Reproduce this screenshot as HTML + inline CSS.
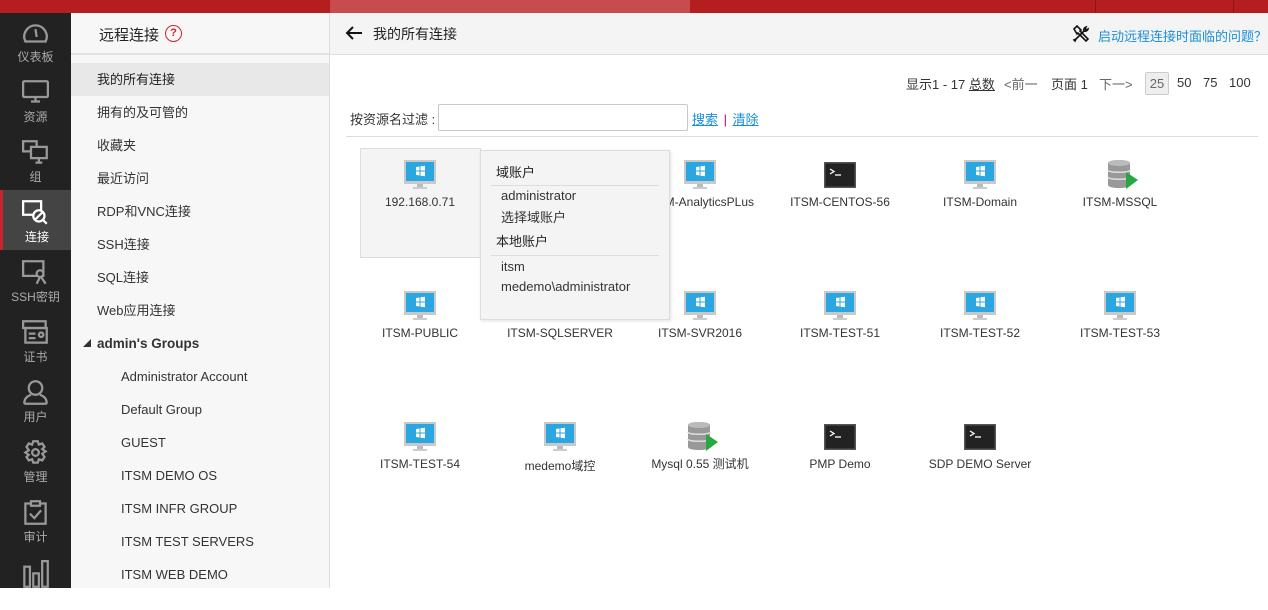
<!DOCTYPE html>
<html><head><meta charset="utf-8"><style>
*{box-sizing:border-box;margin:0;padding:0}
body{width:1268px;height:588px;overflow:hidden;background:#fff;font-family:"Liberation Sans","Noto Sans CJK SC",sans-serif;font-size:13px;color:#333;position:relative}
.abs{position:absolute}
.top{left:0;top:0;width:1268px;height:13px;background:#b51d1f}
.side{left:0;top:13px;width:71px;height:575px;background:#222}
.nav{position:absolute;left:0;width:71px;height:60px;text-align:center;color:#aaa;font-size:12px}
.nav svg{position:absolute;left:22px;top:10px}
.nav span{position:absolute;left:0;right:0;top:38px}
.nav.act{background:#444;color:#fff;border-left:3px solid #c8262b}
.panel{left:71px;top:13px;width:259px;height:575px;background:#f7f7f7;border-right:1px solid #ddd}
.ph{position:absolute;left:0;top:0;width:258px;height:42px;border-bottom:2px solid #e2e2e2}
.mi{position:absolute;left:0;width:258px;height:33px;line-height:33px;padding-left:26px;font-size:13px;color:#333}
.main{left:330px;top:13px;width:938px;height:42px;background:#f4f4f4;border-bottom:1px solid #ddd}
.cell{position:absolute;width:140px;text-align:center;font-size:12px;color:#333}
.cell svg{display:block;margin:0 auto}
.cell div{margin-top:5px}
a{color:#1a8fd8}
</style></head><body>
<div class="abs top"></div>
<div class="abs" style="left:330px;top:0;width:360px;height:13px;background:#c84c4d"></div>
<div class="abs" style="left:1095px;top:0;width:1px;height:13px;background:#8c1516"></div>
<div class="abs" style="left:1233px;top:0;width:1px;height:13px;background:#8c1516"></div>

<div class="abs side"></div>
<svg width="0" height="0" style="position:absolute"><defs>
<symbol id="mon" viewBox="0 0 32 30"><rect x="0" y="0" width="32" height="24" fill="#c9c9c9"/><rect x="2" y="2" width="28" height="19" fill="#2aa6e0"/><rect x="13" y="24" width="6" height="3" fill="#bbb"/><rect x="9" y="27" width="14" height="2" fill="#ccc"/><path d="M12 7l3.5-.5v4H12zM16.5 6.3l4.5-.6v4.8h-4.5zM12 11.5h3.5v4L12 15zM16.5 11.5H21v4.8l-4.5-.6z" fill="#fff"/></symbol>
<symbol id="term" viewBox="0 0 32 26"><rect width="32" height="26" fill="#555"/><rect x="1.5" y="1.5" width="29" height="23" fill="#222"/><path d="M6 7l4 2.5-4 2.5" stroke="#fff" stroke-width="1.3" fill="none"/><path d="M11 13h6" stroke="#fff" stroke-width="1.3"/></symbol>
<symbol id="db" viewBox="0 0 32 32"><path d="M2 5c0-4 22-4 22 0v22c0 4-22 4-22 0z" fill="#999"/><ellipse cx="13" cy="5" rx="11" ry="3" fill="#bbb"/><path d="M2 12c0 3 22 3 22 0M2 19c0 3 22 3 22 0" stroke="#ddd" stroke-width="1.5" fill="none"/><path d="M20 14l12 8-12 9z" fill="#27a845"/></symbol>
</defs></svg>

<div class="nav" style="top:10px"><svg width="27" height="25" viewBox="0 0 24 22" fill="none" stroke="#999" stroke-width="2"><path d="M3 19A10 10 0 1 1 21 19Z"/><path d="M12 8l1 7" /></svg><span>仪表板</span></div>
<div class="nav" style="top:70px"><svg width="27" height="25" viewBox="0 0 24 22" fill="none" stroke="#999" stroke-width="2"><rect x="1" y="1" width="22" height="14" rx="1"/><path d="M8 19h8M12 15v4"/></svg><span>资源</span></div>
<div class="nav" style="top:130px"><svg width="27" height="25" viewBox="0 0 24 22" fill="none" stroke="#999" stroke-width="2"><rect x="1" y="1" width="12" height="9"/><rect x="8" y="6" width="14" height="10" fill="#222"/><path d="M12 20h6M15 16v4"/></svg><span>组</span></div>
<div class="nav act" style="top:190px"><svg width="27" height="25" viewBox="0 0 24 22" fill="none" stroke="#fff" stroke-width="2" style="left:19px"><rect x="1" y="1" width="16" height="12"/><circle cx="15" cy="14" r="5" fill="#444"/><path d="M12 17l6-6M19 18l3 3"/></svg><span>连接</span></div>
<div class="nav" style="top:250px"><svg width="27" height="25" viewBox="0 0 24 22" fill="none" stroke="#999" stroke-width="2"><rect x="1" y="1" width="18" height="13"/><circle cx="16" cy="12" r="3" fill="#222"/><path d="M16 15l-3 6M17 15l4 6"/></svg><span>SSH密钥</span></div>
<div class="nav" style="top:310px"><svg width="27" height="25" viewBox="0 0 24 22" fill="none" stroke="#999" stroke-width="2"><rect x="1" y="1" width="20" height="6"/><rect x="3" y="7" width="19" height="13"/><path d="M6 12h6M6 16h6"/><circle cx="17" cy="13" r="2"/></svg><span>证书</span></div>
<div class="nav" style="top:370px"><svg width="27" height="25" viewBox="0 0 24 22" fill="none" stroke="#999" stroke-width="2"><circle cx="12" cy="7" r="6"/><path d="M2 21c0-6 4-7 6-8M22 21c0-6-4-7-6-8M2 21h20"/></svg><span>用户</span></div>
<div class="nav" style="top:430px"><svg width="27" height="25" viewBox="0 0 24 22" fill="none" stroke="#999" stroke-width="2"><circle cx="12" cy="11" r="3"/><path d="M10 1h4l1 3 3-1 2 3-2 2 3 2-3 2 2 3-2 3-3-1-1 3h-4l-1-3-3 1-2-3 2-2-3-2 3-2-2-3 2-3 3 1z"/></svg><span>管理</span></div>
<div class="nav" style="top:490px"><svg width="27" height="25" viewBox="0 0 24 22" fill="none" stroke="#999" stroke-width="2"><rect x="3" y="3" width="18" height="18"/><rect x="8" y="1" width="8" height="4" fill="#222"/><path d="M7 12l4 4 6-7"/></svg><span>审计</span></div>
<div class="nav" style="top:550px"><svg width="27" height="29" viewBox="0 0 24 26" fill="none" stroke="#999" stroke-width="2"><rect x="2" y="6" width="5" height="18"/><rect x="10" y="12" width="5" height="12"/><rect x="18" y="1" width="5" height="23"/></svg></div>

<div class="abs panel">
 <div class="ph"><span style="position:absolute;left:28px;top:11px;font-size:15px;color:#222">远程连接</span><span style="position:absolute;left:94px;top:12px;width:17px;height:17px;border:1.5px solid #c8262b;border-radius:50%;color:#c8262b;font-size:11px;font-weight:bold;text-align:center;line-height:14px">?</span></div>
 <div class="mi" style="top:50px;background:#e8e8e8;color:#222">我的所有连接</div>
 <div class="mi" style="top:83px">拥有的及可管的</div>
 <div class="mi" style="top:116px">收藏夹</div>
 <div class="mi" style="top:149px">最近访问</div>
 <div class="mi" style="top:182px">RDP和VNC连接</div>
 <div class="mi" style="top:215px">SSH连接</div>
 <div class="mi" style="top:248px">SQL连接</div>
 <div class="mi" style="top:281px">Web应用连接</div>
 <div class="mi" style="top:314px;font-weight:bold;font-size:13.5px;color:#333"><span style="position:absolute;left:12px;font-size:8px">◢</span>admin's Groups</div>
 <div class="mi" style="top:347px;padding-left:50px">Administrator Account</div>
 <div class="mi" style="top:380px;padding-left:50px">Default Group</div>
 <div class="mi" style="top:413px;padding-left:50px">GUEST</div>
 <div class="mi" style="top:446px;padding-left:50px">ITSM DEMO OS</div>
 <div class="mi" style="top:479px;padding-left:50px">ITSM INFR GROUP</div>
 <div class="mi" style="top:512px;padding-left:50px">ITSM TEST SERVERS</div>
 <div class="mi" style="top:545px;padding-left:50px">ITSM WEB DEMO</div>
</div>

<div class="abs main">
 <svg style="position:absolute;left:15px;top:12px" width="18" height="16" viewBox="0 0 18 16" fill="none" stroke="#111" stroke-width="2"><path d="M17 8H2M8 2L2 8l6 6"/></svg>
 <span style="position:absolute;left:43px;top:11px;font-size:14px;color:#222">我的所有连接</span>
 <svg style="position:absolute;left:742px;top:12px" width="18" height="18" viewBox="0 0 18 18" fill="none" stroke="#111" stroke-width="1.6"><path d="M2 4l3-3 4 4-1 1 8 8-2 2-8-8-1 1z"/><path d="M16 4a3 3 0 0 1-4 2L4 14l-1 2-1-1 2-1 8-8a3 3 0 0 1 2-4l-1 2 1 1z"/></svg>
 <span style="position:absolute;left:768px;top:13px;color:#1a8fd8;font-size:13px">启动远程连接时面临的问题？</span>
</div>

<div class="abs" style="left:906px;top:74px;font-size:13px;color:#333">显示1 - 17 <u>总数</u></div>
<div class="abs" style="left:1004px;top:74px;font-size:13px;color:#666">&lt;前一</div>
<div class="abs" style="left:1051px;top:74px;font-size:13px;color:#333">页面 1</div>
<div class="abs" style="left:1099px;top:74px;font-size:13px;color:#666">下一&gt;</div>
<div class="abs" style="left:1145px;top:72px;width:24px;height:23px;border:1px solid #ccc;border-radius:2px;background:#eee;color:#666;text-align:center;line-height:21px">25</div>
<div class="abs" style="left:1177px;top:75px;color:#333">50</div>
<div class="abs" style="left:1203px;top:75px;color:#333">75</div>
<div class="abs" style="left:1229px;top:75px;color:#333">100</div>

<div class="abs" style="left:350px;top:109px;color:#333">按资源名过滤 :</div>
<div class="abs" style="left:438px;top:104px;width:250px;height:27px;border:1px solid #c8c8c8;border-radius:2px;background:#fff"></div>
<div class="abs" style="left:692px;top:109px"><a><u>搜索</u></a> <span style="color:#b07;margin:0 2px">|</span> <a><u>清除</u></a></div>
<div class="abs" style="left:346px;top:136px;width:912px;height:1px;background:#ddd"></div>

<div class="abs" style="left:360px;top:148px;width:121px;height:110px;background:#f4f4f4;border:1px solid #ddd"></div>

<div class="cell" style="left:350px;top:160px"><svg width="32" height="30"><use href="#mon"/></svg><div>192.168.0.71</div></div>
<div class="cell" style="left:630px;top:160px"><svg width="32" height="30"><use href="#mon"/></svg><div>ITSM-AnalyticsPLus</div></div>
<div class="cell" style="left:770px;top:162px"><svg width="32" height="26"><use href="#term"/></svg><div style="margin-top:7px">ITSM-CENTOS-56</div></div>
<div class="cell" style="left:910px;top:160px"><svg width="32" height="30"><use href="#mon"/></svg><div>ITSM-Domain</div></div>
<div class="cell" style="left:1050px;top:158px"><svg width="32" height="32" style="margin-left:56px"><use href="#db"/></svg><div style="margin-top:5px">ITSM-MSSQL</div></div>

<div class="cell" style="left:350px;top:291px"><svg width="32" height="30"><use href="#mon"/></svg><div>ITSM-PUBLIC</div></div>
<div class="cell" style="left:490px;top:291px"><svg width="32" height="30"><use href="#mon"/></svg><div>ITSM-SQLSERVER</div></div>
<div class="cell" style="left:630px;top:291px"><svg width="32" height="30"><use href="#mon"/></svg><div>ITSM-SVR2016</div></div>
<div class="cell" style="left:770px;top:291px"><svg width="32" height="30"><use href="#mon"/></svg><div>ITSM-TEST-51</div></div>
<div class="cell" style="left:910px;top:291px"><svg width="32" height="30"><use href="#mon"/></svg><div>ITSM-TEST-52</div></div>
<div class="cell" style="left:1050px;top:291px"><svg width="32" height="30"><use href="#mon"/></svg><div>ITSM-TEST-53</div></div>

<div class="cell" style="left:350px;top:422px"><svg width="32" height="30"><use href="#mon"/></svg><div>ITSM-TEST-54</div></div>
<div class="cell" style="left:490px;top:422px"><svg width="32" height="30"><use href="#mon"/></svg><div>medemo域控</div></div>
<div class="cell" style="left:630px;top:420px"><svg width="32" height="32" style="margin-left:56px"><use href="#db"/></svg><div style="margin-top:3px">Mysql 0.55 测试机</div></div>
<div class="cell" style="left:770px;top:424px"><svg width="32" height="26"><use href="#term"/></svg><div style="margin-top:7px">PMP Demo</div></div>
<div class="cell" style="left:910px;top:424px"><svg width="32" height="26"><use href="#term"/></svg><div style="margin-top:7px">SDP DEMO Server</div></div>

<div class="abs" style="left:480px;top:150px;width:190px;height:170px;background:#f4f4f4;border:1px solid #ddd;box-shadow:1px 1px 3px rgba(0,0,0,.12);font-size:13px;color:#222">
 <div style="position:absolute;left:15px;top:11px">域账户</div>
 <div style="position:absolute;left:10px;top:34px;width:168px;height:1px;background:#ddd"></div>
 <div style="position:absolute;left:20px;top:37px;color:#333">administrator</div>
 <div style="position:absolute;left:20px;top:56px;color:#333">选择域账户</div>
 <div style="position:absolute;left:15px;top:80px">本地账户</div>
 <div style="position:absolute;left:10px;top:104px;width:168px;height:1px;background:#ddd"></div>
 <div style="position:absolute;left:20px;top:108px;color:#333">itsm</div>
 <div style="position:absolute;left:20px;top:128px;color:#333">medemo\administrator</div>
</div>
</body></html>
